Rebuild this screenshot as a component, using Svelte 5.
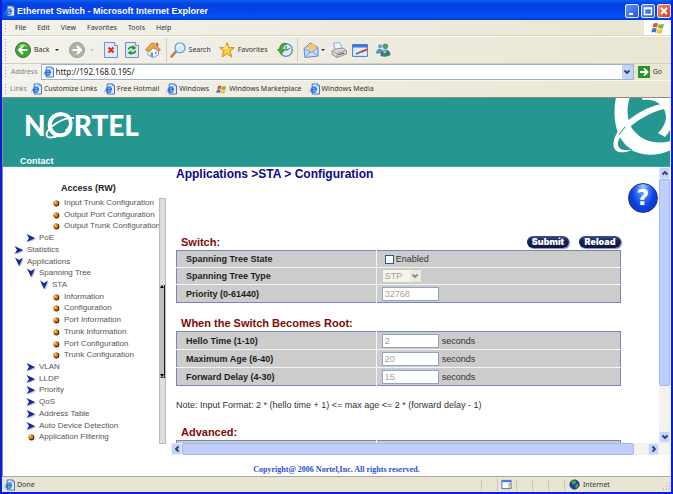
<script lang="ts">
  type TreeItem = { name: string; depth: number; kind: 'leaf' | 'closed' | 'open' };

  const menus = ['File', 'Edit', 'View', 'Favorites', 'Tools', 'Help'];

  const links = [
    { name: 'Customize Links', icon: 'page' },
    { name: 'Free Hotmail', icon: 'page' },
    { name: 'Windows', icon: 'page' },
    { name: 'Windows Marketplace', icon: 'flag' },
    { name: 'Windows Media', icon: 'page' }
  ];

  const tree: TreeItem[] = [
    { name: 'Input Trunk Configuration', depth: 3, kind: 'leaf' },
    { name: 'Output Port Configuration', depth: 3, kind: 'leaf' },
    { name: 'Output Trunk Configuration', depth: 3, kind: 'leaf' },
    { name: 'PoE', depth: 1, kind: 'closed' },
    { name: 'Statistics', depth: 0, kind: 'closed' },
    { name: 'Applications', depth: 0, kind: 'open' },
    { name: 'Spanning Tree', depth: 1, kind: 'open' },
    { name: 'STA', depth: 2, kind: 'open' },
    { name: 'Information', depth: 3, kind: 'leaf' },
    { name: 'Configuration', depth: 3, kind: 'leaf' },
    { name: 'Port Information', depth: 3, kind: 'leaf' },
    { name: 'Trunk Information', depth: 3, kind: 'leaf' },
    { name: 'Port Configuration', depth: 3, kind: 'leaf' },
    { name: 'Trunk Configuration', depth: 3, kind: 'leaf' },
    { name: 'VLAN', depth: 1, kind: 'closed' },
    { name: 'LLDP', depth: 1, kind: 'closed' },
    { name: 'Priority', depth: 1, kind: 'closed' },
    { name: 'QoS', depth: 1, kind: 'closed' },
    { name: 'Address Table', depth: 1, kind: 'closed' },
    { name: 'Auto Device Detection', depth: 1, kind: 'closed' },
    { name: 'Application Filtering', depth: 1, kind: 'leaf' }
  ];

  const timers = [
    { id: 'hello', label: 'Hello Time (1-10)', value: '2' },
    { id: 'maxage', label: 'Maximum Age (6-40)', value: '20' },
    { id: 'delay', label: 'Forward Delay (4-30)', value: '15' }
  ];

  let enabled = $state(false);
  let address = $state('http://192.168.0.195/');
</script>

{#snippet pageIcon()}
  <svg class="icon-sm" viewBox="0 0 12 12" aria-hidden="true">
    <path d="M3.5 .5h6l2 2v9h-8z" fill="#e4ecfc" stroke="#3f62b8" />
    <path d="M9.5 .5v2h2" fill="#b9cdf5" stroke="#3f62b8" stroke-width=".7" />
    <path d="M7.6 8.3A2.7 2.7 0 1 1 8 6.6H3.2" fill="none" stroke="#2473dd" stroke-width="1.8" />
    <path d="M1 9.8C-.2 7.5 4.5 3 8.6 3.3" fill="none" stroke="#4b9cf0" stroke-width=".8" />
  </svg>
{/snippet}

{#snippet flagIcon()}
  <svg class="flag" viewBox="0 0 14 12" aria-hidden="true">
    <path d="M2.6 1.5Q5 .3 7 1.5L6 5.6Q4 4.5 1.5 5.6z" fill="#e8502a" />
    <path d="M7.8 1.9Q10 3 13 1.7L12 5.9Q9.5 7 6.8 6z" fill="#7cb82f" />
    <path d="M1.3 6.4Q3.5 5.4 5.8 6.5L4.9 10.5Q2.8 9.3 .2 10.5z" fill="#3a78dc" />
    <path d="M6.6 6.9Q9 8 11.8 6.8L10.7 10.9Q8.2 12 5.6 10.9z" fill="#f8bd20" />
  </svg>
{/snippet}

{#snippet chevron(turn: string)}
  <svg class="chevron {turn}" viewBox="0 0 8 8" aria-hidden="true">
    <path d="M1.5 2.5L4 5L6.5 2.5" fill="none" stroke="#33405f" stroke-width="1.8" />
  </svg>
{/snippet}

<div class="window">
  <header class="titlebar">
    {@render pageIcon()}
    <span class="title">Ethernet Switch - Microsoft Internet Explorer</span>
    <div class="window-buttons">
      <button class="win-btn" aria-label="Minimize">
        <svg viewBox="0 0 12 12"><path d="M3 9h4" stroke="#fff" stroke-width="2" /></svg>
      </button>
      <button class="win-btn" aria-label="Maximize">
        <svg viewBox="0 0 12 12"><path d="M2.5 3.5h7v6h-7zM2 3h8" fill="none" stroke="#fff" stroke-width="1.5" /></svg>
      </button>
      <button class="win-btn close" aria-label="Close">
        <svg viewBox="0 0 12 12"><path d="M3 3l6 6M9 3l-6 6" stroke="#fff" stroke-width="1.8" /></svg>
      </button>
    </div>
  </header>

  <nav class="menubar">
    <i class="grip"></i>
    {#each menus as menu (menu)}
      <button class="menu">{menu}</button>
    {/each}
    <div class="brand">{@render flagIcon()}</div>
  </nav>

  <div class="toolbar">
    <i class="grip"></i>
    <button class="tool back">
      <svg viewBox="0 0 16 16" aria-hidden="true">
        <circle cx="8" cy="8" r="7.5" fill="#3fa535" stroke="#2d8328" />
        <path d="M3 5Q8-1 13 5Q8 3 3 5" fill="#9bdc85" />
        <path d="M12.5 8H4.5M8 4L4 8l4 4" fill="none" stroke="#fff" stroke-width="2" />
      </svg>
      Back
    </button>
    <span class="caret"></span>
    <button class="tool forward" aria-label="Forward">
      <svg viewBox="0 0 16 16">
        <circle cx="8" cy="8" r="7.5" fill="#b3b3ae" stroke="#999" />
        <path d="M3.5 8h8M8 4l4 4l-4 4" fill="none" stroke="#fff" stroke-width="2" />
      </svg>
    </button>
    <span class="caret faded"></span>
    <button class="tool stop" aria-label="Stop">
      <svg viewBox="0 0 16 16">
        <path d="M1.5 .5h10l3 3v12h-13z" fill="#dfe9fc" stroke="#7290c8" />
        <path d="M11.5 .5v3h3" fill="#fff" stroke="#7290c8" />
        <path d="M5.5 5.5l5 5M10.5 5.5l-5 5" stroke="#dc3515" stroke-width="2.2" />
      </svg>
    </button>
    <button class="tool" aria-label="Refresh">
      <svg viewBox="0 0 16 16">
        <path d="M1.5 .5h10l3 3v12h-13z" fill="#dfe9fc" stroke="#7290c8" />
        <path d="M11.5 .5v3h3" fill="#fff" stroke="#7290c8" />
        <path d="M4.5 7.5Q5 4.5 9.5 5.5M11.5 8.5Q11 12 6.5 11" fill="none" stroke="#259a22" stroke-width="1.8" />
        <path d="M8.5 3l4 3l-4 2.2zM7.5 8.3v5l-4-2.5z" fill="#259a22" />
      </svg>
    </button>
    <button class="tool" aria-label="Home">
      <svg viewBox="0 0 16 16">
        <path d="M3 8L6 5.5L13.5 8v5L8 15.5L3 13z" fill="#fdfdfd" stroke="#6d8bc4" stroke-width=".8" />
        <path d="M.5 8L6 1.5L9 1L15.5 8L13 9L8.5 4.5L5 9.5z" fill="#f3a53e" stroke="#a9672c" stroke-width=".7" />
        <path d="M11 .8h2.3v4L11 2.8z" fill="#d05a35" />
        <path d="M5.5 10.5h2.5v4.7l-2.5-1z" fill="#6692dd" />
        <path d="M10 9.5h2v2.5l-2 .8z" fill="#82b4ee" />
      </svg>
    </button>
    <i class="divider"></i>
    <button class="tool">
      <svg viewBox="0 0 16 16" aria-hidden="true">
        <path d="M6 9.5L1.5 14.5" stroke="#bd7b3c" stroke-width="2.6" stroke-linecap="round" />
        <circle cx="10" cy="5.8" r="5" fill="#d3eafb" stroke="#6b9cdb" stroke-width="1.3" />
        <path d="M7 5Q8 2 11.5 2.7" stroke="#fff" stroke-width="1.5" fill="none" />
      </svg>
      Search
    </button>
    <button class="tool favorites">
      <svg viewBox="0 0 16 16" aria-hidden="true">
        <path d="M8 .7l2 5h5.3l-4.2 3.5l1.8 5.8L8 11.7L3.1 15l1.5-5.8L.7 5.7H6z" fill="#fbcf3a" stroke="#d28a22" />
        <path d="M8 3l1 4H4z" fill="#fff1a0" />
      </svg>
      Favorites
    </button>
    <button class="tool history" aria-label="History">
      <svg viewBox="0 0 16 16">
        <circle cx="9" cy="8" r="6.3" fill="#d7effc" stroke="#6b8fa8" stroke-width="1.3" />
        <path d="M9 4v4.5l3.5-2" fill="none" stroke="#456" />
        <path d="M10 1.5Q3 0 2.5 7.5H.3l4.2 4.5l3.5-4.5H5.5Q5.5 4 10 1.5z" fill="#42af35" stroke="#287f27" stroke-width=".7" />
      </svg>
    </button>
    <i class="divider near"></i>
    <button class="tool" aria-label="Mail">
      <svg viewBox="0 0 16 16">
        <path d="M1 6.5L7.5 1L15 5.5V14L2 15.5z" fill="#c9defa" stroke="#5d86cb" />
        <path d="M3.5 6Q5 1.5 9 2Q12 2 13 6L8.5 9z" fill="#fbc960" />
        <path d="M1 6.5L8.5 10.5L15 5.5M2 15.5L7 9.8M15 14L9.5 9.5" fill="none" stroke="#6d94d2" />
      </svg>
    </button>
    <span class="caret mail-caret"></span>
    <button class="tool" aria-label="Print">
      <svg viewBox="0 0 16 16">
        <path d="M4 8L2.5 1L8.5 .5L11.5 7z" fill="#e9f3ff" stroke="#7ba0d4" stroke-width=".8" />
        <path d="M1 9L4 7L12 6L15.5 8.5V12L6 15.5L1 12.5z" fill="#d2d2d2" stroke="#858585" stroke-width=".8" />
        <path d="M1 9L6 11.5L15.5 8.5M6 11.5v4" fill="none" stroke="#999" stroke-width=".8" />
        <path d="M7 12.8l6-1.8" stroke="#555" />
      </svg>
    </button>
    <button class="tool edit" aria-label="Edit">
      <svg viewBox="0 0 16 16">
        <path d="M.6 2.6h14.8v11.8H.6z" fill="#e1ebfa" stroke="#4878cb" />
        <path d="M.5 2.5h15v3H.5z" fill="#3c77df" />
        <path d="M4 12L12 8.5" stroke="#666" stroke-width="1.5" />
        <path d="M9.5 9.8L15 7.3" stroke="#d34525" stroke-width="2" />
      </svg>
    </button>
    <button class="tool" aria-label="Messenger">
      <svg viewBox="0 0 16 16">
        <circle cx="5" cy="4.3" r="2" fill="#6aa2cf" />
        <path d="M.8 11.5Q1.5 6.5 5 6.8Q8 7 8 11.5z" fill="#5b90c9" />
        <circle cx="10.3" cy="4.2" r="2.8" fill="#539b85" />
        <path d="M5.5 14Q5.5 7.5 10.5 7.5Q15.5 8 15.5 13Q11 15.8 5.5 14z" fill="#397b78" />
        <path d="M8 9Q10 7.5 12 9.5L9 12z" fill="#92ccb5" />
      </svg>
    </button>
  </div>

  <form class="addressbar" onsubmit={(e) => e.preventDefault()}>
    <i class="grip"></i>
    <label for="address">Address</label>
    <div class="address-box">
      {@render pageIcon()}
      <input id="address" type="text" bind:value={address} />
      <button type="button" class="drop" aria-label="Show history">{@render chevron('down')}</button>
    </div>
    <button class="go">
      <svg viewBox="0 0 12 12" aria-hidden="true">
        <rect width="12" height="12" fill="#2c942c" />
        <path d="M2 6h7M6 2.5L9.5 6L6 9.5" fill="none" stroke="#fff" stroke-width="1.8" />
      </svg>
      Go
    </button>
  </form>

  <nav class="linksbar">
    <i class="grip"></i>
    <span class="links-title">Links</span>
    {#each links as link (link.name)}
      <a href="#top">
        {#if link.icon === 'page'}
          {@render pageIcon()}
        {:else}
          {@render flagIcon()}
        {/if}
        {link.name}
      </a>
    {/each}
  </nav>

  <div class="page">
    <div class="banner">
      <div class="logo">
        <span>N</span>
        <svg viewBox="0 0 30 28" aria-label="O">
          <path d="M17 3.5A10.5 10.5 0 1 0 25.5 16" fill="none" stroke="#fff" stroke-width="4" />
          <path d="M15 3Q25 3 25.8 12Q26 17 21 20.5" fill="none" stroke="#fff" stroke-width="3.6" />
          <path d="M29 7C18 6 3 16 1.5 23C1 28 9 27 15 24" fill="none" stroke="#fff" stroke-width="1.8" />
        </svg>
        <span>RTEL</span>
      </div>
      <a class="contact" href="#contact">Contact</a>
      <svg class="corner" viewBox="0 0 58 57" aria-hidden="true">
        <path d="M4 -1C2 9 2 19 4 28C6 40 12 48 21 53C33 58 46 58 59 52V43C44 47 31 43 23 34C16 27 13 13 18 -1z" fill="#fff" />
        <path d="M29 -1L31 2C41 1 47 4 51 10C56 17 55 26 46 35L53 39Q58 34 60 27V-1z" fill="#fff" />
        <path d="M50 6C30 9 6 27 2 42C-1 54 8 57 20 52C12 53 5 52 6 44C10 32 32 16 52 11z" fill="#fff" />
        <path d="M7 37L13 29M8 40Q12 48 20 52" fill="none" stroke="#259790" stroke-width="1" />
      </svg>
    </div>

    <div class="frames">
      <aside class="sidebar">
        <h2>Access (RW)</h2>
        <div class="tree-wrap">
          <ul class="tree">
            {#each tree as item (item)}
              <li class="depth-{item.depth}">
                <a href="#tree">
                  <svg viewBox="0 0 10 10" aria-hidden="true">
                    {#if item.kind === 'leaf'}
                      <circle cx="5.5" cy="5.5" r="2.9" fill="#5d2608" />
                      <circle cx="5" cy="5" r="2.3" fill="#df7d12" />
                      <circle cx="4.3" cy="4.2" r="1" fill="#ffd060" />
                    {:else if item.kind === 'closed'}
                      <path d="M2 2.5L10 6L2 9.5L4.5 6z" fill="#a9b3ca" />
                      <path d="M.5 1L9 5L.5 9L3 5z" fill="#15279b" />
                    {:else}
                      <path d="M2.5 2L6 10L9.5 2L6 4.5z" fill="#a9b3ca" />
                      <path d="M1 .5L5 9L9 .5L5 3z" fill="#15279b" />
                    {/if}
                  </svg>
                  {item.name}
                </a>
              </li>
            {/each}
          </ul>
          <div class="tree-scroll">
            <div class="tree-thumb">
              <i class="arrow up"></i>
              <i class="arrow"></i>
            </div>
          </div>
        </div>
      </aside>

      <main class="main">
        <div class="scroll-row">
          <div class="content">
            <div class="heading">
              <h1>Applications &gt;STA &gt; Configuration</h1>
              <button class="help" aria-label="Help">?</button>
            </div>

            <div class="settings">
              <div class="section-title">
                <h3>Switch:</h3>
                <button class="pill">Submit</button>
                <button class="pill">Reload</button>
              </div>
              <table>
                <tbody>
                  <tr>
                    <th scope="row">Spanning Tree State</th>
                    <td>
                      <label class="check"><input type="checkbox" bind:checked={enabled} />Enabled</label>
                    </td>
                  </tr>
                  <tr>
                    <th scope="row"><label for="type">Spanning Tree Type</label></th>
                    <td>
                      <div class="select">
                        <select id="type" disabled><option>STP</option></select>
                        <span class="select-arrow">{@render chevron('down')}</span>
                      </div>
                    </td>
                  </tr>
                  <tr class="tall">
                    <th scope="row"><label for="priority">Priority (0-61440)</label></th>
                    <td><input id="priority" class="field" type="text" value="32768" disabled /></td>
                  </tr>
                </tbody>
              </table>

              <h3 class="spaced">When the Switch Becomes Root:</h3>
              <table>
                <tbody>
                  {#each timers as timer (timer.id)}
                    <tr class="tall">
                      <th scope="row"><label for={timer.id}>{timer.label}</label></th>
                      <td>
                        <div class="unit">
                          <input id={timer.id} class="field" type="text" value={timer.value} disabled />
                          seconds
                        </div>
                      </td>
                    </tr>
                  {/each}
                </tbody>
              </table>

              <p class="note">Note: Input Format: 2 * (hello time + 1) &lt;= max age &lt;= 2 * (forward delay - 1)</p>

              <h3>Advanced:</h3>
              <table>
                <tbody>
                  <tr>
                    <th scope="row"></th>
                    <td></td>
                  </tr>
                </tbody>
              </table>
            </div>
          </div>
          <div class="vscroll">
            <button aria-label="Scroll up">{@render chevron('up')}</button>
            <div class="track"><div class="thumb"></div></div>
            <button aria-label="Scroll down">{@render chevron('down')}</button>
          </div>
        </div>
        <div class="hscroll">
          <button aria-label="Scroll left">{@render chevron('left')}</button>
          <div class="track"><div class="thumb"></div></div>
          <button aria-label="Scroll right">{@render chevron('right')}</button>
        </div>
      </main>
    </div>

    <footer class="copyright">Copyright@ 2006 Nortel,Inc. All rights reserved.</footer>
  </div>

  <div class="statusbar">
    <div class="status">{@render pageIcon()}Done</div>
    <i class="cell"></i>
    <div class="cell popup">
      <svg viewBox="0 0 12 12" aria-hidden="true">
        <path d="M1 1.5h10v9H1z" fill="#fff" stroke="#3768c8" />
        <path d="M1 1.5h10v2H1z" fill="#3d7be5" />
        <path d="M9 4.5v3M9 8.5v1" stroke="#e88a20" stroke-width="1.5" />
      </svg>
    </div>
    <i class="cell"></i>
    <i class="cell"></i>
    <i class="cell"></i>
    <div class="cell zone">
      <svg viewBox="0 0 12 12" aria-hidden="true">
        <circle cx="6" cy="6" r="5" fill="#1c3fa8" stroke="#122a66" />
        <path d="M3 2l4-.5l1 2L5.5 6L3 5.5zM7 6l3-1l-.5 4L7 10z" fill="#3fae3c" />
      </svg>
      Internet
      <svg class="resize" viewBox="0 0 8 8" aria-hidden="true">
        <path d="M6 1h1M6 4h1M3 4h1M0 7h1M3 7h1M6 7h1" stroke="#a39f8a" stroke-width="1" />
      </svg>
    </div>
  </div>
</div>

<style>
  :global(body) {
    margin: 0;
  }

  .window {
    --ui: 'Noto Sans', sans-serif;
    box-sizing: border-box;
    display: flex;
    flex-direction: column;
    height: 100vh;
    border: solid #0a1fd8;
    border-width: 0 2px 2px;
    background: #fff;
    color: #333;
    font-family: 'Liberation Sans', Arial, sans-serif;
    font-size: 9px;
    overflow: hidden;
  }

  button,
  input,
  select {
    margin: 0;
    padding: 0;
    border: 0;
    background: none;
    color: inherit;
    font: inherit;
  }

  a {
    color: inherit;
    text-decoration: none;
  }

  h1,
  h2,
  h3,
  p,
  ul {
    margin: 0;
    padding: 0;
  }

  svg {
    display: block;
    flex: none;
  }

  .icon-sm {
    width: 11px;
    height: 12px;
  }

  .flag {
    width: 11px;
    height: 11px;
  }

  /* title bar */
  .titlebar {
    display: flex;
    align-items: center;
    gap: 2px;
    flex: none;
    height: 20px;
    padding: 2px 0 0 2px;
    box-sizing: border-box;
    background: linear-gradient(#0a60f0, #0540e0 20%, #0345ec 60%, #0550fa 85%, #0338c4);
    color: #fff;
    font: bold 9px/16px 'Liberation Sans', sans-serif;
  }

  .title {
    flex: 1;
  }

  .window-buttons {
    display: flex;
    gap: 2px;
  }

  .win-btn {
    width: 14px;
    height: 14px;
    border: 1px solid #dfe8ff;
    border-radius: 2px;
    background: linear-gradient(135deg, #6b93f7, #2457dc);
  }

  .win-btn svg {
    width: 12px;
    height: 12px;
  }

  .win-btn.close {
    background: linear-gradient(135deg, #ef8c6c, #d1401c);
  }

  /* browser bars */
  .menubar,
  .toolbar,
  .addressbar,
  .linksbar {
    display: flex;
    align-items: center;
    flex: none;
    box-sizing: border-box;
    padding-left: 3px;
    background: linear-gradient(90deg, #f3f2ec, #e9e6d3);
    font: 7px/10px var(--ui);
  }

  .grip {
    width: 1px;
    height: 11px;
    flex: none;
    background: repeating-linear-gradient(#a9a694 0 1px, transparent 1px 3px);
  }

  .menubar {
    height: 16px;
    gap: 11px;
    border-bottom: 1px solid #dcd9c8;
  }

  .menubar .grip {
    margin-right: -2px;
  }

  .brand {
    display: grid;
    place-items: center;
    width: 27px;
    height: 15px;
    margin-left: auto;
    background: #fff;
  }

  .brand .flag {
    width: 14px;
    height: 12px;
  }

  .toolbar {
    height: 28px;
    border-top: 1px solid #fbfaf5;
    border-bottom: 1px solid #d3d0bf;
  }

  .toolbar .grip {
    height: 22px;
    margin-right: 9px;
  }

  .tool {
    display: flex;
    align-items: center;
    gap: 3px;
    margin-right: 5px;
  }

  .tool svg {
    width: 16px;
    height: 16px;
  }

  .caret {
    flex: none;
    border: 2px solid transparent;
    border-top-color: #222;
    border-bottom: 0;
  }

  .caret.faded {
    border-top-color: #bbb8aa;
  }

  .forward {
    margin-left: 10px;
  }

  .stop {
    margin-left: 9px;
  }

  .mail-caret {
    margin: 0 6px 0 -3px;
  }

  .edit {
    margin-right: 7px;
  }

  .favorites {
    margin-left: 3px;
  }

  .history {
    margin-left: 4px;
  }

  .divider {
    width: 1px;
    height: 24px;
    margin-right: 3px;
    background: #cfccba;
  }

  .divider.near {
    margin: 0 5px 0 -1px;
  }

  .addressbar {
    height: 16px;
    gap: 3px;
    color: #85857b;
  }

  .addressbar label {
    padding-left: 2px;
  }

  .address-box {
    display: flex;
    align-items: center;
    gap: 2px;
    flex: 1;
    height: 14px;
    padding-left: 1px;
    border: 1px solid #9fb2cc;
    background: #fff;
  }

  .address-box input {
    flex: 1;
    min-width: 0;
    outline: 0;
    color: #222;
    font-size: 8px;
  }

  .drop {
    display: grid;
    place-items: center;
    width: 11px;
    height: 14px;
    background: #c3d3fb;
  }

  .go {
    display: flex;
    align-items: center;
    gap: 3px;
    padding: 0 9px 0 1px;
    color: #333;
  }

  .go svg {
    width: 12px;
    height: 12px;
  }

  .linksbar {
    height: 17px;
    gap: 7px;
    border-top: 1px solid #f7f6ef;
  }

  .linksbar a {
    display: flex;
    align-items: center;
    gap: 2px;
  }

  .links-title {
    margin: 0 -3px;
    color: #85857b;
  }

  /* page */
  .page {
    display: flex;
    flex-direction: column;
    flex: 1;
    min-height: 0;
    border: 1px solid #8d8b7c;
    border-right-color: #eee;
    border-bottom-color: #aaa89a;
  }

  .banner {
    display: flex;
    flex-direction: column;
    justify-content: space-between;
    position: relative;
    flex: none;
    height: 69px;
    box-sizing: border-box;
    padding: 10px 0 0 17px;
    border-bottom: 1px solid #3fa8a0;
    background: #259790;
    color: #fff;
    overflow: hidden;
  }

  .logo {
    display: flex;
    align-items: center;
    height: 34px;
    padding-left: 4px;
    font: 900 28px/34px Lato, sans-serif;
  }

  .logo svg {
    width: 30px;
    height: 28px;
    margin: 0 -1px;
  }

  .contact {
    font: bold 9px/10px 'Liberation Sans', Arial, sans-serif;
  }

  .corner {
    position: absolute;
    top: 0;
    right: 0;
    width: 58px;
    height: 57px;
  }

  .frames {
    display: flex;
    flex: 1;
    min-height: 0;
  }

  .sidebar {
    display: flex;
    flex-direction: column;
    flex: none;
    width: 168px;
    box-sizing: border-box;
    padding: 15px 5px 11px 11px;
  }

  .sidebar h2 {
    height: 16px;
    padding-left: 47px;
    color: #222;
    font-size: 9px;
    line-height: 12px;
  }

  .tree-wrap {
    display: flex;
    flex: 1;
    min-height: 0;
  }

  .tree {
    display: grid;
    grid-auto-rows: 1fr;
    flex: 1;
    min-width: 0;
    overflow: hidden;
    list-style: none;
    color: #555;
    font-size: 8px;
    line-height: 10px;
    white-space: nowrap;
  }

  .tree a {
    display: flex;
    align-items: center;
    gap: 3px;
  }

  .tree svg {
    width: 10px;
    height: 10px;
  }

  .depth-1 {
    padding-left: 12px;
  }

  .depth-2 {
    padding-left: 25px;
  }

  .depth-3 {
    padding-left: 37px;
  }

  .tree-scroll {
    display: flex;
    flex-direction: column;
    justify-content: center;
    width: 7px;
    box-sizing: border-box;
    padding-top: 21px;
    border: 1px solid #bbb;
    background: #dedede;
  }

  .tree-thumb {
    display: flex;
    flex-direction: column;
    justify-content: space-between;
    height: 42%;
    border-right: 1px solid #222;
    background: #c0c0c0;
  }

  .arrow {
    border: 2px solid transparent;
    border-top: 3px solid #000;
    border-bottom: 1px solid #000;
  }

  .arrow.up {
    border-top: 0;
    border-bottom: 3px solid #000;
  }

  .main {
    display: flex;
    flex-direction: column;
    flex: 1;
    min-width: 0;
  }

  .scroll-row {
    display: flex;
    flex: 1;
    min-height: 0;
  }

  .content {
    flex: 1;
    padding-left: 5px;
    overflow: hidden;
  }

  .heading {
    display: flex;
    justify-content: space-between;
    height: 68px;
  }

  h1 {
    color: #0a0a86;
    font-size: 12px;
    line-height: 15px;
  }

  .help {
    width: 30px;
    height: 30px;
    margin: 16px 1px 0 0;
    border: 1px solid #1a2f7c;
    border-radius: 50%;
    background: radial-gradient(ellipse at 50% 8%, #a9cbff 0, #3d7cf3 30%, #0b3fe0 60%, #0a3ad0);
    color: #fff;
    font: bold 22px/28px 'DejaVu Sans', sans-serif;
  }

  .settings {
    margin-right: 38px;
  }

  .section-title {
    display: flex;
    gap: 10px;
  }

  h3 {
    flex: 1;
    padding-left: 5px;
    color: #7d0a0a;
    font-size: 11px;
    line-height: 15px;
  }

  h3.spaced {
    margin-top: 13px;
  }

  .pill {
    width: 42px;
    height: 12px;
    margin-top: 1px;
    border-radius: 6px;
    background: linear-gradient(#44548c, #14205c 40%, #0d1748);
    box-shadow: 1px 1px 1px #8a8fa8;
    color: #fff;
    font: 900 9px/12px Inter, sans-serif;
  }

  table {
    width: 100%;
    border: 1px solid #7c84b4;
    border-collapse: collapse;
    table-layout: fixed;
    background: #ccc;
  }

  tr {
    height: 17px;
  }

  tr.tall {
    height: 18px;
  }

  tr + tr {
    border-top: 1px solid #f4f4f4;
  }

  th,
  td {
    padding: 0;
    text-align: left;
    line-height: 12px;
  }

  th {
    width: 45%;
    padding-left: 9px;
    border-right: 1px solid #f4f4f4;
    box-sizing: border-box;
    color: #1c1c1c;
  }

  td {
    padding-left: 5px;
  }

  .check {
    display: flex;
    align-items: center;
    gap: 2px;
    padding-left: 3px;
  }

  .check input {
    appearance: none;
    width: 9px;
    height: 9px;
    border: 1px solid #2f5786;
    background: #fff;
  }

  .check input:checked {
    background: #2f9a2f;
  }

  .field {
    display: block;
    box-sizing: border-box;
    width: 57px;
    height: 14px;
    padding-left: 2px;
    border: 1px solid #8fa5c2;
    background: #fff;
    color: #a5a292;
  }

  .unit {
    display: flex;
    align-items: center;
    gap: 3px;
  }

  .select {
    display: flex;
    align-items: center;
    box-sizing: border-box;
    width: 40px;
    height: 14px;
    border: 1px solid #cdcbbb;
    background: #f5f4ee;
  }

  .select select {
    flex: 1;
    min-width: 0;
    padding-left: 2px;
    appearance: none;
    color: #a5a292;
    opacity: 1;
  }

  .select-arrow {
    display: grid;
    place-items: center;
    width: 11px;
    height: 12px;
    background: #e6e4d6;
    opacity: 0.6;
  }

  .note {
    margin: 13px 0;
    line-height: 13px;
  }

  /* scrollbars */
  .chevron {
    width: 8px;
    height: 8px;
  }

  .chevron.up {
    transform: rotate(180deg);
  }

  .chevron.left {
    transform: rotate(90deg);
  }

  .chevron.right {
    transform: rotate(-90deg);
  }

  .vscroll,
  .hscroll {
    display: flex;
    flex: none;
    background: #f4f3ee;
  }

  .vscroll {
    flex-direction: column;
    width: 11px;
  }

  .hscroll {
    height: 12px;
    padding-right: 11px;
  }

  .vscroll button,
  .hscroll button {
    display: grid;
    place-items: center;
    flex: none;
    width: 11px;
    height: 12px;
    border: 1px solid #e6edfe;
    background: #c3d3fb;
  }

  .track {
    display: flex;
    flex: 1;
  }

  .thumb {
    border: 1px solid #a4b9ee;
    border-radius: 2px;
    box-sizing: border-box;
    background: #bfcffb;
  }

  .vscroll .thumb {
    width: 100%;
    height: 82%;
  }

  .hscroll .thumb {
    width: 97%;
  }

  .copyright {
    flex: none;
    padding: 9px 0 1px;
    color: #2c50d8;
    font: bold 8px/11px 'Liberation Serif', 'Times New Roman', serif;
    text-align: center;
  }

  /* status bar */
  .statusbar {
    display: flex;
    align-items: center;
    flex: none;
    height: 15px;
    background: #e8e5d2;
    font: 7px/10px var(--ui);
  }

  .status {
    display: flex;
    align-items: center;
    gap: 2px;
    flex: 1;
    padding-left: 2px;
  }

  .cell {
    display: flex;
    align-items: center;
    width: 15px;
    height: 12px;
    border-left: 1px solid #c9c6b4;
  }

  .cell.popup {
    padding-left: 3px;
  }

  .cell svg {
    width: 11px;
    height: 11px;
  }

  .cell.zone {
    gap: 3px;
    width: 102px;
    padding-left: 4px;
  }

  .cell .resize {
    width: 8px;
    height: 8px;
    margin: 3px 0 0 auto;
  }
</style>
